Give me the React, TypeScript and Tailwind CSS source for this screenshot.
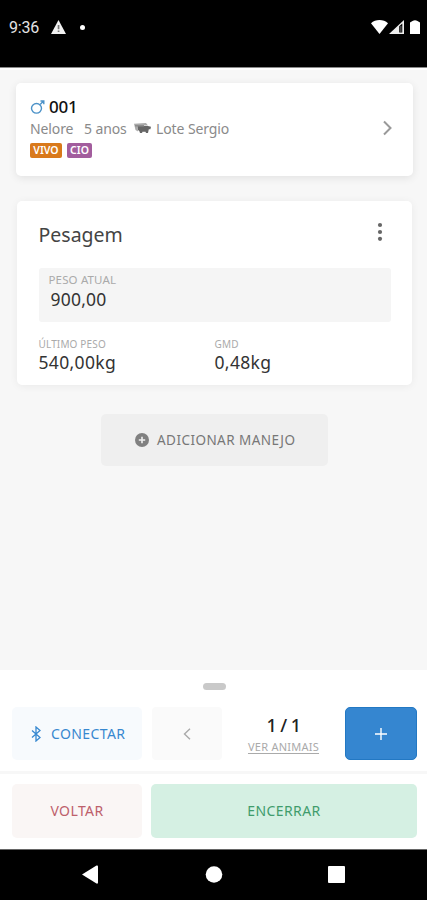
import type { ReactNode } from "react";

type StatProps = {
  label: string;
  value: string;
};

type TagProps = {
  className: string;
  children: ReactNode;
};

function StatusBar() {
  return (
    <header className="flex h-[68px] shrink-0 items-start border-b border-[#8a8a8a] bg-black pl-[9px] pr-[7px] pt-[18px] text-white">
      <span className="w-[42px] font-['Roboto',sans-serif] text-[16px] leading-[20px] tracking-[-0.2px] text-[#e4e4e4]">
        9:36
      </span>
      <svg className="mt-[2px] h-[14px] w-[15px]" viewBox="0 0 15 14">
        <path d="M7.5 0 15 14H0z" fill="#f2f2f2" />
        <path d="M6.7 5h1.7v4.3H6.7zM6.7 10.4h1.7v1.6H6.7z" fill="#777" />
      </svg>
      <span className="ml-[14px] mt-[7px] size-[5px] rounded-full bg-white" />
      <div className="ml-auto mt-[2px] flex">
        <svg className="h-[14px] w-[17px]" viewBox="0 0 17 14">
          <path d="M0 3.2C4.5-1 12.500-1 17 3.200L8.500 14z" fill="#fff" />
        </svg>
        <svg className="ml-px h-[14px] w-[15px]" viewBox="0 0 15 14">
          <path d="M15 0v14H0z" fill="#eee" />
          <path d="M10.200 6.300 13.300 3.400V12.500H10.200z" fill="#000" />
          <path d="M11.400 6h1v6.500h-1z" fill="#777" />
        </svg>
        <svg className="ml-[6px] h-[14px] w-[10px]" viewBox="0 0 10 14">
          <path d="M2.500 1Q5-.5 7.500 1L10 2.500V14H0V2.500z" fill="#fff" />
        </svg>
      </div>
    </header>
  );
}

function Tag({ className, children }: TagProps) {
  return (
    <span
      className={`flex h-[15px] items-center justify-center rounded-[2px] text-[10.5px] font-semibold leading-none text-white ${className}`}
    >
      {children}
    </span>
  );
}

function CattleIcon() {
  return (
    <svg className="ml-[8px] mr-[5px] h-[12px] w-[17px]" viewBox="0 0 17 12">
      <path d="M0 .8 12 0l2 2.500H3.500L4 8.500 1.500 7z" fill="#aaa" />
      <path
        d="M3.500 3H14l3 .8-.6 2.400h-1.600L14 10h-2l-.5-1.200H8.500L8 10H6L5.300 8 4 7z"
        fill="#666"
      />
      <path d="M1 2h9v1.500H1z" fill="#8d8d8d" />
    </svg>
  );
}

function AnimalCard() {
  return (
    <section className="ml-[16px] flex h-[93px] w-[397px] items-start justify-between rounded-[5px] bg-white pl-[14px] pr-[20px] pt-[14px] shadow-[0_2px_9px_rgba(0,0,0,0.09)]">
      <div>
        <div className="flex h-[20px] items-center">
          <svg
            className="mr-[4px] h-[14px] w-[15px]"
            viewBox="0 0 15 14"
            fill="none"
            stroke="#4c92c8"
            strokeWidth="1.4"
          >
            <ellipse cx="6.500" cy="8.300" rx="5" ry="4.800" />
            <path d="M10.200 4.500 13.300 1.300M10.500 1h3.300v3.300" />
          </svg>
          <span className="text-[17px] font-medium leading-[20px] tracking-[-0.2px] text-[#111]">
            001
          </span>
        </div>
        <div className="mt-px flex h-[22px] items-center whitespace-nowrap text-[14px] leading-[22px] text-[#8a8a8a]">
          <span className="w-[54px] tracking-[-0.1px]">Nelore</span>
          <span className="w-[42px] tracking-[-0.1px]">5 anos</span>
          <CattleIcon />
          <span className="tracking-[-0.1px]">Lote Sergio</span>
        </div>
        <div className="mt-[3px] flex gap-[5px]">
          <Tag className="w-[32px] bg-[#d9791b]">VIVO</Tag>
          <Tag className="w-[25px] bg-[#a25d9d]">CIO</Tag>
        </div>
      </div>
      <svg
        className="mt-[23px] h-[16px] w-[11px]"
        viewBox="0 0 11 16"
        fill="none"
        stroke="#999"
        strokeWidth="2"
      >
        <path d="m2 1.500 6.500 6.500L2 14.500" />
      </svg>
    </section>
  );
}

function Stat({ label, value }: StatProps) {
  return (
    <div className="w-[176px]">
      <p className="text-[10px] leading-[14px] tracking-[0.15px] text-[#aaa]">{label}</p>
      <p className="mt-px text-[17.5px] leading-[20px] tracking-[0.35px] text-[#333]">{value}</p>
    </div>
  );
}

function WeighingCard() {
  return (
    <section className="ml-[17px] mt-[25px] h-[184px] w-[395px] rounded-[5px] bg-white px-[21.500px] shadow-[0_1px_9px_rgba(0,0,0,0.06)]">
      <div className="flex h-[67px] items-center justify-between pr-[8px]">
        <h2 className="text-[19.5px] leading-[26px] tracking-[0px] text-[#444]">Pesagem</h2>
        <svg className="mb-[5px] h-[20px] w-[6px]" viewBox="0 0 6 20" fill="#666">
          <circle cx="3" cy="3" r="2.100" />
          <circle cx="3" cy="10" r="2.100" />
          <circle cx="3" cy="16.800" r="2.100" />
        </svg>
      </div>
      <div className="h-[54px] w-[352px] rounded-[3px] bg-[#f5f5f5] pl-[10px] pt-[4px]">
        <p className="text-[11.5px] leading-[16px] tracking-[0.15px] text-[#aaa]">PESO ATUAL</p>
        <p className="ml-[2px] text-[17.5px] leading-[22px] tracking-[0.2px] text-[#333]">900,00</p>
      </div>
      <div className="mt-[15px] flex">
        <Stat label="ÚLTIMO PESO" value="540,00kg" />
        <Stat label="GMD" value="0,48kg" />
      </div>
    </section>
  );
}

function BottomPanel() {
  return (
    <footer className="h-[179px] shrink-0 bg-white">
      <div className="ml-[203px] h-[37px] w-[23px] pt-[13px]">
        <div className="h-[7px] rounded-full bg-[#c9c9c9]" />
      </div>
      <div className="flex h-[64px] pl-[12px]">
        <button className="flex h-[53px] w-[130px] items-center rounded-[5px] bg-[#f7fafd] pl-[19px] text-[14px] tracking-[0.4px] text-[#3788d0]">
          <svg
            className="mr-[10px] h-[16px] w-[10px]"
            viewBox="0 0 10 16"
            fill="none"
            stroke="currentColor"
            strokeWidth="1.300"
          >
            <path d="m1 4.500 8 7-4 3.500V1l4 3.500-8 7" />
          </svg>
          CONECTAR
        </button>
        <button className="ml-[10px] flex h-[53px] w-[70px] items-center justify-center rounded-[4px] bg-[#fafafa]">
          <svg
            className="h-[12px] w-[8px]"
            viewBox="0 0 8 12"
            fill="none"
            stroke="#aaa"
            strokeWidth="1.400"
          >
            <path d="M7 .8 1.500 6 7 11.200" />
          </svg>
        </button>
        <div className="w-[123px] pt-[7px] text-center">
          <p className="text-[18px] font-medium leading-[22px] tracking-[-0.6px] text-[#222]">
            1 / 1
          </p>
          <p className="mt-[2px] text-[11px] leading-[17px] tracking-[0.25px] text-[#aaa] underline underline-offset-2">
            VER ANIMAIS
          </p>
        </div>
        <button className="flex h-[53px] w-[72px] items-center justify-center rounded-[5px] border border-[#2378c3] bg-[#3586d0]">
          <svg className="size-[12px]" viewBox="0 0 12 12" stroke="#fff" strokeWidth="1.400">
            <path d="M6 0v12M0 6h12" />
          </svg>
        </button>
      </div>
      <div className="h-[3px] bg-[#f7f7f7]" />
      <div className="flex gap-[9px] pl-[12px] pt-[10px] text-[14px] tracking-[0.4px]">
        <button className="h-[54px] w-[130px] rounded-[5px] bg-[#faf6f5] pb-[2px] text-[#bd606b]">
          VOLTAR
        </button>
        <button className="h-[54px] w-[266px] rounded-[5px] bg-[#d5f0e3] pb-[2px] text-[#3f9c6c]">
          ENCERRAR
        </button>
      </div>
    </footer>
  );
}

function NavigationBar() {
  return (
    <nav className="h-[51px] shrink-0 border-t border-[#666] bg-black">
      <svg className="h-[50px] w-[427px]" viewBox="0 0 427 50" fill="#fff">
        <path d="M82 24.500 96.500 15.500Q98 15 98 16.500V32.500Q98 34 96.500 33.500z" />
        <circle cx="214" cy="24.500" r="8.300" />
        <rect x="328" y="16" width="17" height="17" rx="1" />
      </svg>
    </nav>
  );
}

export default function App() {
  return (
    <div className="flex h-[900px] w-[427px] flex-col overflow-hidden bg-[#f7f7f7] font-['Noto_Sans',sans-serif]">
      <StatusBar />
      <main className="grow border-t-2 border-white pt-[13px]">
        <AnimalCard />
        <WeighingCard />
        <button className="ml-[101px] mt-[29px] flex h-[52px] w-[227px] items-center rounded-[5px] bg-[#efefef] pl-[34px] text-[13.500px] tracking-[0.45px] text-[#777]">
          <svg className="mr-[8px] size-[14px]" viewBox="0 0 14 14">
            <circle cx="7" cy="7" r="7" fill="#808080" />
            <path d="M7 3.800v6.400M3.800 7h6.400" stroke="#efefef" strokeWidth="1.600" />
          </svg>
          ADICIONAR MANEJO
        </button>
      </main>
      <BottomPanel />
      <NavigationBar />
    </div>
  );
}
